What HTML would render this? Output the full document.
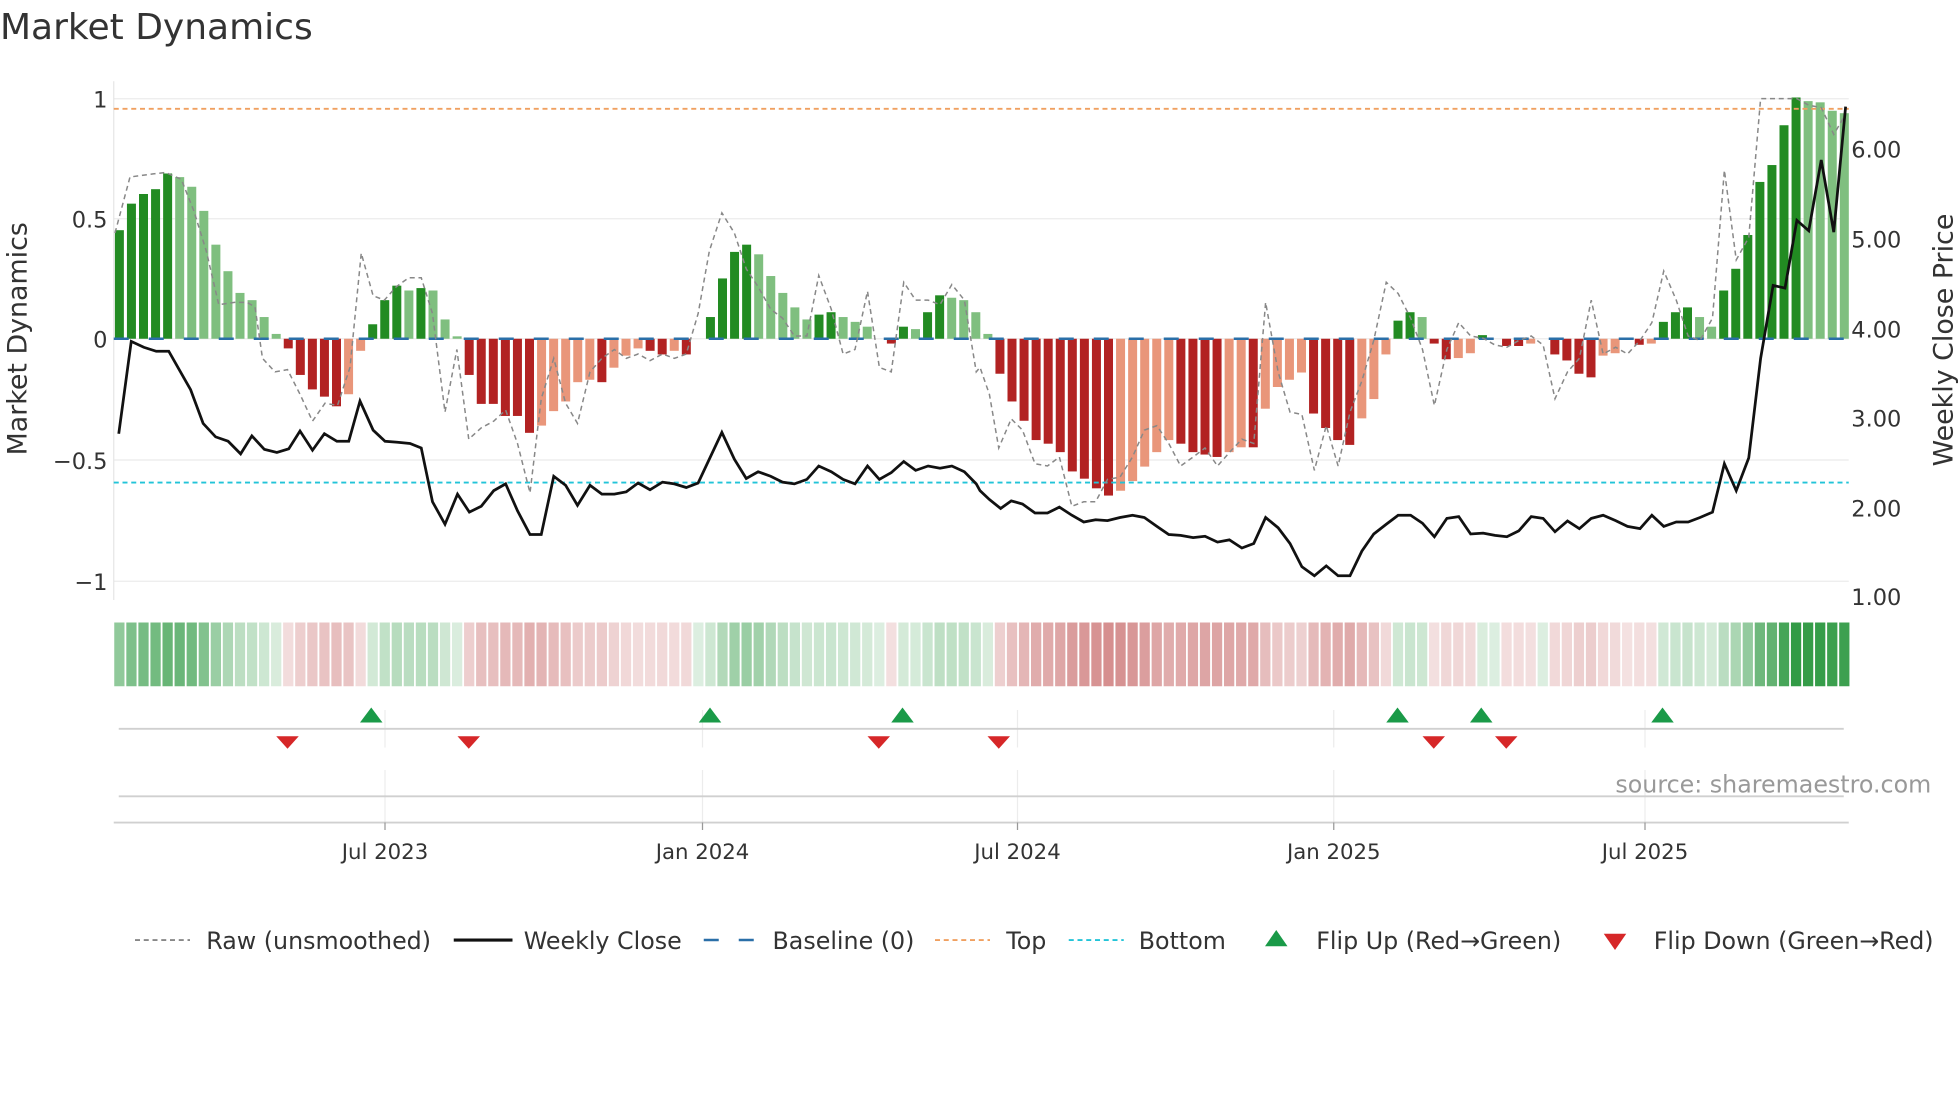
<!DOCTYPE html>
<html><head><meta charset="utf-8"><style>
html,body{margin:0;padding:0;background:#fff;}
svg{display:block;font-family:"DejaVu Sans","Liberation Sans",sans-serif;}
</style></head><body>
<svg id="s" width="1960" height="1102" viewBox="0 0 1568 881.6" xmlns="http://www.w3.org/2000/svg">
<rect width="1568" height="881.6" fill="#fff"/>
<text x="0" y="31" font-size="28.8" fill="#333">Market Dynamics</text>
<g id="grid" stroke="#ebebeb" stroke-width="1">
<line x1="91" y1="79" x2="1479" y2="79"/><line x1="91" y1="175" x2="1479" y2="175"/>
<line x1="91" y1="271" x2="1479" y2="271"/><line x1="91" y1="368" x2="1479" y2="368"/>
<line x1="91" y1="465" x2="1479" y2="465"/>
</g>
<line x1="91" y1="65" x2="91" y2="480" stroke="#e6e6e6"/>
<g font-size="18" fill="#333" text-anchor="end">
<text x="86" y="86">1</text><text x="86" y="182">0.5</text><text x="86" y="278">0</text>
<text x="86" y="375">−0.5</text><text x="86" y="472">−1</text>
</g>
<g font-size="18" fill="#333">
<text x="1481" y="126">6.00</text><text x="1481" y="198">5.00</text><text x="1481" y="270">4.00</text>
<text x="1481" y="341">3.00</text><text x="1481" y="413">2.00</text><text x="1481" y="484">1.00</text>
</g>
<text transform="translate(21,271) rotate(-90)" font-size="21.5" fill="#333" text-anchor="middle">Market Dynamics</text>
<text transform="translate(1562,272) rotate(-90)" font-size="21.5" fill="#333" text-anchor="middle">Weekly Close Price</text>
<g id="bars"></g>
<line x1="91" y1="87" x2="1479" y2="87" stroke="#f0a060" stroke-width="1.5" stroke-dasharray="4,3"/>
<line x1="91" y1="386" x2="1479" y2="386" stroke="#22c4d8" stroke-width="1.5" stroke-dasharray="4,3"/>
<line x1="91" y1="271" x2="1479" y2="271" stroke="#2a6fa8" stroke-width="2" stroke-dasharray="12,16"/>
<polyline id="raw" fill="none" stroke="#888" stroke-width="1.2" stroke-dasharray="4,3"/>
<polyline id="close" fill="none" stroke="#111" stroke-width="2.2"/>
<g id="strip"></g>
<g stroke="#ececec" stroke-width="1">
<line x1="308" y1="568" x2="308" y2="598"/><line x1="308" y1="616" x2="308" y2="658"/>
<line x1="562" y1="568" x2="562" y2="598"/><line x1="562" y1="616" x2="562" y2="658"/>
<line x1="814" y1="568" x2="814" y2="598"/><line x1="814" y1="616" x2="814" y2="658"/>
<line x1="1067" y1="568" x2="1067" y2="598"/><line x1="1067" y1="616" x2="1067" y2="658"/>
<line x1="1316" y1="568" x2="1316" y2="598"/><line x1="1316" y1="616" x2="1316" y2="658"/>
</g>
<line x1="95" y1="583" x2="1475" y2="583" stroke="#d0d0d0" stroke-width="1.5"/>
<line x1="95" y1="637" x2="1475" y2="637" stroke="#d0d0d0" stroke-width="1.5"/>
<line x1="91" y1="658" x2="1479" y2="658" stroke="#d0d0d0" stroke-width="1.5"/>
<g stroke="#999" stroke-width="1">
<line x1="308" y1="658" x2="308" y2="664"/><line x1="562" y1="658" x2="562" y2="664"/>
<line x1="814" y1="658" x2="814" y2="664"/><line x1="1067" y1="658" x2="1067" y2="664"/>
<line x1="1316" y1="658" x2="1316" y2="664"/>
</g>
<g id="marks"></g>
<text x="1545" y="634" font-size="19" fill="#999" text-anchor="end">source: sharemaestro.com</text>
<g font-size="17" fill="#333" text-anchor="middle">
<text x="308" y="687">Jul 2023</text><text x="562" y="687">Jan 2024</text><text x="814" y="687">Jul 2024</text>
<text x="1067" y="687">Jan 2025</text><text x="1316" y="687">Jul 2025</text>
</g>
<g font-size="19" fill="#333">
<line x1="108" y1="752" x2="152" y2="752" stroke="#888" stroke-width="1.5" stroke-dasharray="4,3"/>
<text x="165" y="759">Raw (unsmoothed)</text>
<line x1="363" y1="752" x2="410" y2="752" stroke="#111" stroke-width="2.5"/>
<text x="419" y="759">Weekly Close</text>
<line x1="563" y1="752" x2="607" y2="752" stroke="#2a6fa8" stroke-width="2" stroke-dasharray="12,16"/>
<text x="618" y="759">Baseline (0)</text>
<line x1="748" y1="752" x2="792" y2="752" stroke="#f0a060" stroke-width="1.5" stroke-dasharray="4,3"/>
<text x="805" y="759">Top</text>
<line x1="855" y1="752" x2="899" y2="752" stroke="#22c4d8" stroke-width="1.5" stroke-dasharray="4,3"/>
<text x="911" y="759">Bottom</text>
<polygon points="1012,757 1030,757 1021,744" fill="#1a9a48"/>
<text x="1053" y="759">Flip Up (Red→Green)</text>
<polygon points="1283,747 1301,747 1292,760" fill="#d62728"/>
<text x="1323" y="759">Flip Down (Green→Red)</text>
</g>
</svg>
<script>
var NS="http://www.w3.org/2000/svg";
var v=[0.45,0.56,0.60,0.62,0.685,0.67,0.63,0.53,0.39,0.28,0.19,0.16,0.09,0.02,-0.04,-0.15,-0.21,-0.24,-0.28,-0.23,-0.05,0.06,0.16,0.22,0.20,0.21,0.20,0.08,0.01,-0.15,-0.27,-0.27,-0.32,-0.32,-0.39,-0.36,-0.30,-0.26,-0.18,-0.17,-0.18,-0.12,-0.07,-0.04,-0.05,-0.065,-0.05,-0.065,0.0,0.09,0.25,0.36,0.39,0.35,0.26,0.19,0.13,0.08,0.10,0.11,0.09,0.07,0.05,0.0,-0.02,0.05,0.04,0.11,0.18,0.17,0.16,0.11,
0.02,-0.145,-0.26,-0.34,-0.42,-0.435,-0.47,-0.55,-0.58,-0.62,-0.65,-0.63,-0.59,-0.53,-0.47,-0.42,-0.435,-0.47,-0.48,-0.49,-0.47,-0.45,-0.45,-0.29,-0.20,-0.17,-0.14,-0.31,-0.37,-0.42,-0.44,-0.33,-0.25,-0.065,0.075,0.11,0.09,-0.02,-0.085,-0.08,-0.06,0.015,0.0,-0.03,-0.03,-0.02,0.0,-0.065,-0.09,-0.145,-0.16,-0.07,-0.06,-0.005,-0.025,-0.02,0.07,0.11,0.13,0.09,0.05,0.20,0.29,0.43,0.65,0.72,0.885,1.0,0.985,0.98,0.945,0.935];
var bars=document.getElementById("bars"),strip=document.getElementById("strip");
function el(t,a,p){var e=document.createElementNS(NS,t);for(var k in a)e.setAttribute(k,a[k]);p.appendChild(e);return e;}
function mix(c,f){return "rgb("+c.map(function(x){return Math.round(255-(255-x)*f)}).join(",")+")";}
for(var i=0;i<v.length;i++){
 var cx=95.5+9.65*i,val=v[i],prev=i?v[i-1]:0,col;
 if(val>=0) col=(val>=prev)?"#228b22":"#7fbf7f"; else col=(val<=prev)?"#b22222":"#e9967a";
 var y=271-193*val;
 if(Math.abs(val)>0.003) el("rect",{x:cx-3.6,y:Math.min(y,271),width:7.2,height:Math.abs(271-y),fill:col},bars);
 var t=Math.min(1,Math.abs(val)),sc;
 if(val>=0) sc=mix([50,155,70],0.17+0.83*t); else sc=mix([190,80,80],0.17+0.72*t);
 el("rect",{x:cx-4.1,y:498,width:8.2,height:51,fill:sc},strip);
}
function pts(a,b){var r=[];for(var i=0;i<a.length;i+=2)r.push((a[i]/2).toFixed(1)+","+(a[i+1]/2.79).toFixed(1));for(i=0;i<b.length;i+=2)r.push((784+b[i]/2).toFixed(1)+","+(b[i+1]/2.79).toFixed(1));return r.join(" ");}
var c1=[190,968,210,762,230,775,250,784,270,784,305,870,325,945,345,975,365,985,385,1013,403,973,423,1003,443,1010,462,1002,480,962,500,1005,519,968,539,985,558,985,576,895,597,960,616,985,636,987,656,990,674,1000,692,1120,712,1170,732,1103,751,1143,770,1130,790,1095,809,1080,828,1140,848,1193,866,1193,886,1063,905,1083,924,1128,944,1083,963,1103,983,1103,1002,1098,1021,1078,1040,1093,1060,1076,1079,1080,1098,1088,1117,1078,1155,965,1175,1025,1194,1068,1213,1053,1233,1063,1252,1076,1271,1080,1291,1070,1310,1040,1330,1053,1349,1070,1368,1080,1388,1040,1407,1070,1426,1055,1446,1030,1465,1050,1485,1040,1504,1045,1523,1040,1543,1053,1562,1080];
var c2=[0,1095,15,1115,33,1135,50,1118,68,1125,88,1145,108,1145,127,1132,147,1150,166,1165,185,1160,204,1162,224,1155,244,1150,263,1155,283,1175,302,1193,321,1195,341,1200,360,1197,380,1210,399,1205,419,1223,438,1213,457,1155,477,1178,496,1213,515,1265,535,1285,554,1263,573,1285,592,1285,611,1230,630,1192,650,1170,669,1150,689,1150,708,1168,727,1198,747,1157,766,1153,785,1192,805,1190,824,1195,843,1198,862,1185,882,1153,901,1157,920,1187,940,1163,959,1180,978,1157,997,1150,1017,1162,1036,1175,1056,1180,1075,1150,1094,1175,1114,1165,1133,1165,1152,1155,1172,1143,1191,1035,1210,1095,1230,1022,1249,800,1269,637,1288,643,1307,492,1326,515,1346,357,1366,518,1385,238];
var r1=[184,520,208,395,245,388,265,385,290,400,310,470,330,560,350,680,375,675,395,675,408,685,420,800,440,830,460,825,480,880,500,940,520,900,540,905,560,820,578,565,597,660,615,670,634,640,654,620,674,620,692,700,712,920,731,780,750,980,770,955,790,940,809,915,828,990,848,1100,866,890,886,800,905,900,924,945,944,830,963,800,983,780,1002,800,1021,790,1040,805,1060,790,1079,800,1098,790,1117,700,1135,560,1155,475,1175,520,1194,600,1213,640,1233,690,1252,710,1271,750,1291,750,1310,615,1330,690,1349,790,1368,780,1388,650,1407,820,1426,830,1446,630,1465,670,1485,670,1504,680,1523,635,1543,670,1562,830];
var r2=[0,820,15,880,30,1000,50,935,68,960,88,1035,108,1040,127,1020,147,1130,166,1120,185,1120,204,1070,224,1065,244,1020,263,960,283,950,302,990,321,1040,341,1020,360,1000,380,1040,399,1010,419,980,438,990,457,675,477,830,496,920,515,925,535,1050,554,950,573,1040,592,920,611,850,630,760,650,630,669,655,689,710,708,780,727,905,747,780,766,720,785,750,805,755,824,770,843,775,862,760,882,750,901,770,920,890,940,830,959,800,978,670,997,790,1017,775,1036,790,1056,760,1075,720,1094,605,1114,670,1133,750,1152,760,1172,710,1191,380,1210,580,1230,530,1249,220,1269,220,1288,220,1307,220,1326,235,1346,240,1366,300,1385,255];
document.getElementById("close").setAttribute("points",pts(c1,c2));
document.getElementById("raw").setAttribute("points",pts(r1,r2));
var m=document.getElementById("marks");
[297,568,722,1118,1185,1330].forEach(function(x){el("polygon",{points:(x-9)+",578 "+(x+9)+",578 "+x+",566",fill:"#1a9a48"},m);});
[230,375,703,799,1147,1205].forEach(function(x){el("polygon",{points:(x-9)+",589 "+(x+9)+",589 "+x+",599",fill:"#d62728"},m);});
</script>
</body></html>
